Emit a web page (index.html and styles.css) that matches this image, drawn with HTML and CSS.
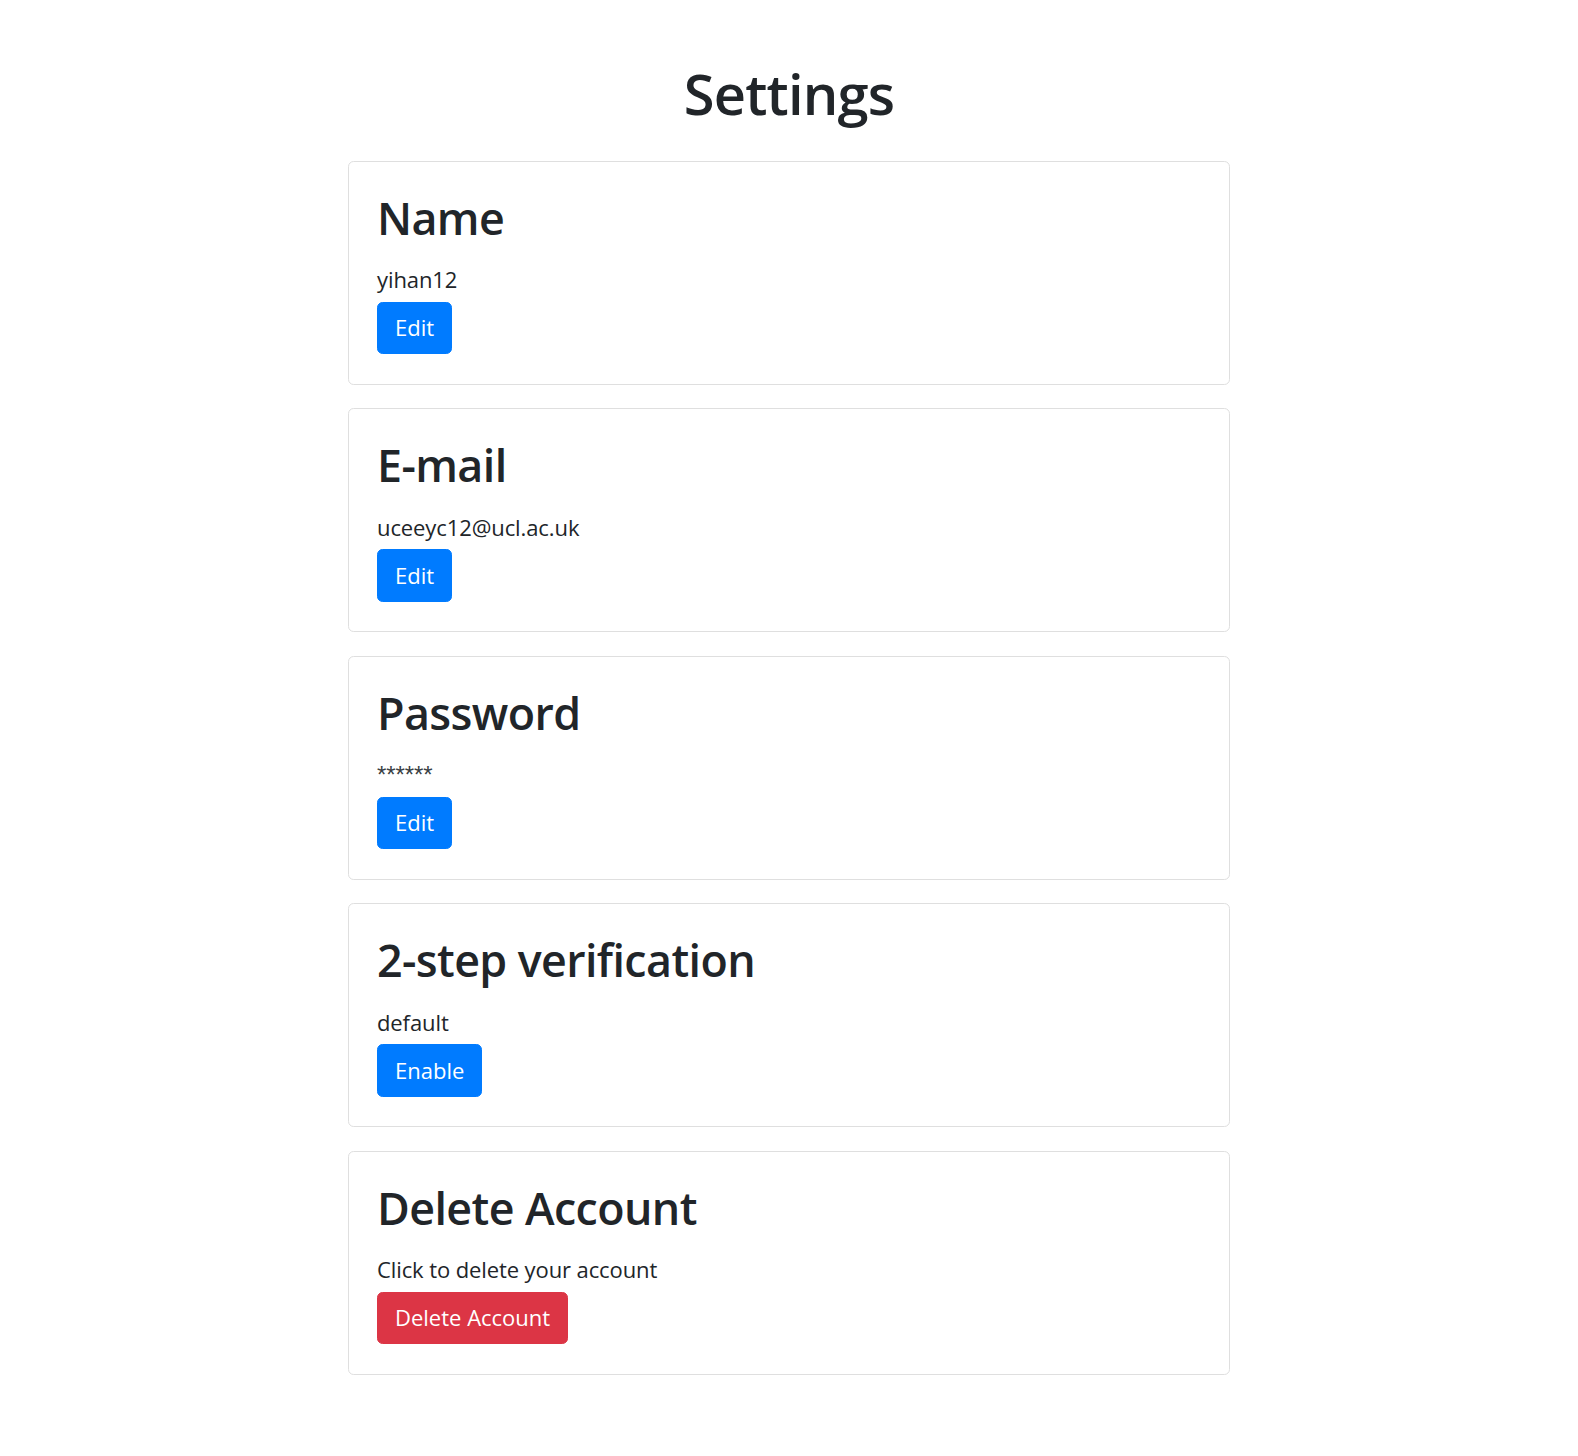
FILE: index.html
```html
<!DOCTYPE html>
<html lang="en">
<head>
<meta charset="utf-8">
<title>Settings</title>
<link rel="stylesheet" href="styles.css">
</head>
<body>
<main class="container">
  <h1 class="page-title">Settings</h1>
  <section class="card">
    <h2 class="card-title">Name</h2>
    <p class="card-text">yihan12</p>
    <button class="btn btn-primary" type="button">Edit</button>
  </section>
  <section class="card">
    <h2 class="card-title">E-mail</h2>
    <p class="card-text">uceeyc12@ucl.ac.uk</p>
    <button class="btn btn-primary" type="button">Edit</button>
  </section>
  <section class="card">
    <h2 class="card-title">Password</h2>
    <p class="card-text masked">******</p>
    <button class="btn btn-primary" type="button">Edit</button>
  </section>
  <section class="card">
    <h2 class="card-title">2-step verification</h2>
    <p class="card-text">default</p>
    <button class="btn btn-primary" type="button">Enable</button>
  </section>
  <section class="card">
    <h2 class="card-title">Delete Account</h2>
    <p class="card-text">Click to delete your account</p>
    <button class="btn btn-danger" type="button">Delete Account</button>
  </section>
</main>
</body>
</html>
```
FILE: styles.css
```css
* { box-sizing: border-box; }
html, body { margin: 0; padding: 0; background: #fff; }
body {
  font-family: "Open Sans", "Noto Sans", sans-serif;
  font-size: 22.4px;
  line-height: 1.5;
  color: #212529;
}
.container {
  width: 882px;
  margin: 0 auto;
  padding: 60px 0 80px;
  display: flex;
  flex-direction: column;
  gap: 23.5px;
}
.page-title {
  margin: 0 0 10px;
  font-size: 56px;
  font-weight: 600;
  letter-spacing: -0.8px;
  line-height: 1.2;
  text-align: center;
}
.card {
  border: 1px solid #dfdfdf;
  border-radius: 5.6px;
  padding: 29px 28px 28px;
  display: flex;
  flex-direction: column;
  align-items: flex-start;
  height: 224px;
}
.card-title {
  margin: 0 0 18.7px;
  font-size: 44.8px;
  font-weight: 600;
  letter-spacing: -0.6px;
  line-height: 1.2;
}
.card-text {
  margin: 0 0 5px;
  font-size: 22px;
  line-height: 33.6px;
  letter-spacing: -0.1px;
}
.masked {
  font-family: "Liberation Sans", sans-serif;
  font-size: 24px;
  color: #3a3f44;
}
.btn {
  font-family: inherit;
  font-size: 22px;
  line-height: 33.6px;
  padding: 8.5px 17px;
  border: 1.4px solid transparent;
  border-radius: 5.6px;
  color: #fff;
  cursor: pointer;
}
.btn-primary { background: #007bff; border-color: #007bff; }
.btn-danger { background: #dc3545; border-color: #dc3545; }
```
